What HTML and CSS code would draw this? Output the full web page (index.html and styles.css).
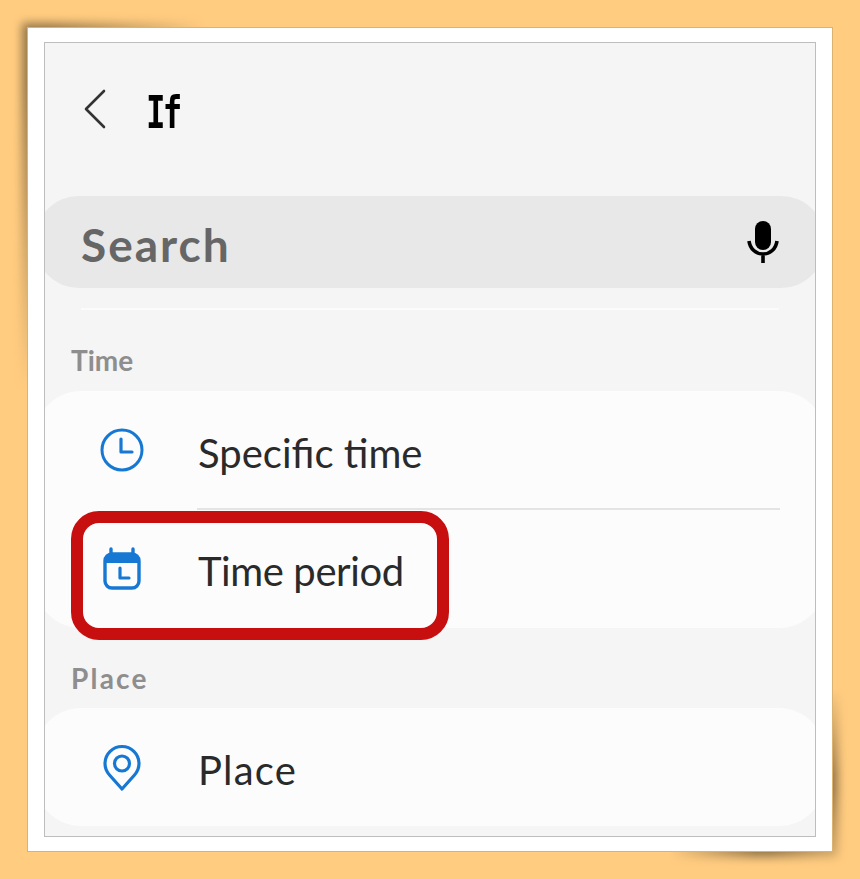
FILE: index.html
```html
<!DOCTYPE html>
<html lang="en">
<head>
  <meta charset="UTF-8">
  <title>If</title>
  <link rel="stylesheet" href="styles.css">
</head>
<body>
  <div class="frame">
    <div class="screen">
      <div class="header">
        <svg class="back" width="24" height="40" viewBox="0 0 24 40"><path d="M20 2 2 20l18 18" fill="none" stroke="#333" stroke-width="2.6" stroke-linecap="round" stroke-linejoin="round"/></svg>
        <h1>If</h1>
      </div>
      <div class="search">
        <span>Search</span>
        <svg width="32" height="42" viewBox="0 0 32 42"><rect x="8" y="0" width="16" height="29" rx="8" fill="#000"/><path d="M2 20c1 8 7 13 14 13s13-5 14-13M16 33v9" fill="none" stroke="#000" stroke-width="3.6"/></svg>
      </div>
      <div class="rule"></div>

      <h2>Time</h2>
      <div class="card">
        <div class="row row-first">
          <svg class="icon" width="44" height="44" viewBox="0 0 44 44"><circle cx="22" cy="22" r="20" fill="none" stroke="#1678d2" stroke-width="3"/><path d="M21 11v13h11" fill="none" stroke="#1678d2" stroke-width="3.2" stroke-linecap="round" stroke-linejoin="round"/></svg>
          <span class="label">Specific time</span>
        </div>
        <div class="row row-line">
          <svg class="icon icon-cal" width="44" height="44" viewBox="0 0 44 44"><path d="M11 2v5M33 2v5" stroke="#1678d2" stroke-width="3.4" stroke-linecap="round"/><rect x="5" y="7" width="34" height="34" rx="7" fill="none" stroke="#1678d2" stroke-width="3.4"/><path d="M5 16v-2a7 7 0 0 1 7-7h20a7 7 0 0 1 7 7v2z" fill="#1678d2"/><path d="M20 21v10h9" fill="none" stroke="#1678d2" stroke-width="3.2" stroke-linecap="round" stroke-linejoin="round"/></svg>
          <span class="label label-period">Time period</span>
          <div class="highlight"></div>
        </div>
      </div>

      <h2 class="h2-place">Place</h2>
      <div class="card">
        <div class="row">
          <svg class="icon" width="44" height="47" viewBox="0 0 44 47"><path d="M22 45 9.5 31a17 17 0 1 1 25 0z" fill="none" stroke="#1678d2" stroke-width="3.2" stroke-linejoin="round"/><circle cx="22" cy="19.5" r="7.5" fill="none" stroke="#1678d2" stroke-width="3.2"/></svg>
          <span class="label label-place">Place</span>
        </div>
      </div>
    </div>
  </div>
</body>
</html>
```
FILE: styles.css
```css
body {
  margin: 0;
  background-color: #ffcc80;
  font-family: "Lato", "Noto Sans", sans-serif;
  overflow: hidden;
}
.frame {
  position: relative;
  margin: 28px;
  height: 823px;
  box-sizing: border-box;
  padding: 14px 16px 16px;
  background-color: #fff;
  outline: 1px solid #dcb271;
}
/* curled shadows top left and bottom right, the box is 20px larger than the wedge so the blur has room */
.frame::before {
  content: "";
  position: absolute;
  z-index: -1;
  left: -26px;
  top: -25px;
  width: 240px;
  height: 460px;
  background: linear-gradient(to bottom right, #96774a 50%, transparent 50%) center / calc(100% - 40px) calc(100% - 40px) no-repeat;
  filter: blur(5px);
  -webkit-mask-image: radial-gradient(ellipse 100% 100% at 0 0, #000 20%, transparent 85%);
  mask-image: radial-gradient(ellipse 100% 100% at 0 0, #000 20%, transparent 85%);
}
.frame::after {
  content: "";
  position: absolute;
  z-index: -1;
  right: -26px;
  bottom: -26px;
  width: 250px;
  height: 220px;
  background: linear-gradient(to top left, #96774a 50%, transparent 50%) center / calc(100% - 40px) calc(100% - 40px) no-repeat;
  filter: blur(5px);
  -webkit-mask-image: radial-gradient(circle at 100% 100%, rgba(0, 0, 0, 0.3) 20px, #000 90px, #000 105px, transparent 190px);
  mask-image: radial-gradient(circle at 100% 100%, rgba(0, 0, 0, 0.3) 20px, #000 90px, #000 105px, transparent 190px);
}
.screen {
  height: 793px;
  border: 1px solid #bdbdbd;
  background-color: #f5f5f5;
  overflow: hidden;
}
.header {
  display: flex;
  align-items: center;
  height: 153px;
  padding-left: 39px;
  gap: 38px;
}
.back {
  margin-top: -22px;
}
h1 {
  margin: -14px 0 0;
  font-family: "DejaVu Sans Mono", monospace;
  font-size: 45px;
  font-weight: 700;
  letter-spacing: -4px;
  color: #000;
  transform: scaleX(0.72);
  transform-origin: left center;
}
.search {
  display: flex;
  justify-content: space-between;
  align-items: center;
  height: 92px;
  margin: 0 -10px;
  padding: 0 46px;
  border-radius: 44px;
  background-color: #e8e8e8;
  font-size: 46px;
  font-weight: 700;
  letter-spacing: 2px;
  color: #666;
}
.search span {
  padding-top: 5px;
}
.rule {
  height: 2px;
  margin: 20px 36px 0;
  background-color: #fbfbfb;
}
h2 {
  margin: 0;
  padding: 34px 0 15px 26px;
  height: 32px;
  line-height: 32px;
  font-size: 28px;
  font-weight: 700;
  color: #8e8e8e;
}
.h2-place {
  padding-top: 34px;
  padding-bottom: 14px;
  letter-spacing: 2.2px;
}
.card {
  margin: 0 -10px;
  border-radius: 46px;
  background-color: #fcfcfc;
}
.row {
  position: relative;
  display: flex;
  align-items: center;
  height: 118px;
  padding-left: 65px;
}
.row-first {
  height: 117px;
}
.row-line {
  height: 120px;
}
.row-line::before {
  content: "";
  position: absolute;
  left: 162px;
  right: 45px;
  top: 0;
  height: 2px;
  background-color: #e4e4e4;
}
.icon {
  flex: none;
  margin-right: 54px;
}
.icon-cal {
  margin-top: 2px;
}
.label {
  padding-top: 6px;
  font-size: 40px;
  color: #2a2a2a;
}
.label-period {
  letter-spacing: -0.4px;
}
.label-place {
  letter-spacing: 1.2px;
}
.highlight {
  position: absolute;
  left: 36px;
  top: 3px;
  width: 378px;
  height: 129px;
  box-sizing: border-box;
  border: 12px solid #c80f0f;
  border-radius: 28px;
}
```
